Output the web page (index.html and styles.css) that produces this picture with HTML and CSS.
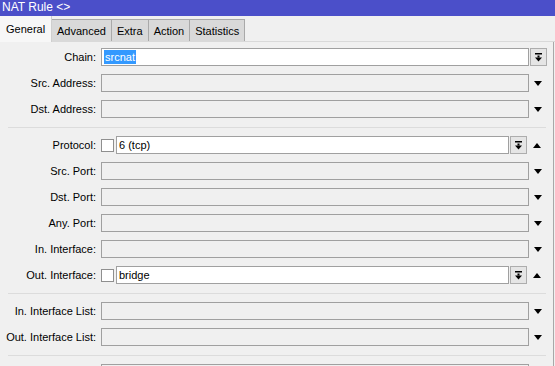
FILE: index.html
```html
<!DOCTYPE html>
<html lang="en">
<head>
    <meta charset="UTF-8">
    <title>NAT Rule</title>
    <link rel="stylesheet" href="styles.css">
</head>
<body>
    <div class="window">
        <div class="titlebar">NAT Rule &lt;&gt;</div>

        <!-- tabs -->
        <div class="tabs">
            <div class="tab active">General</div>
            <div class="tab">Advanced</div>
            <div class="tab">Extra</div>
            <div class="tab">Action</div>
            <div class="tab">Statistics</div>
        </div>

        <div class="panel">
            <div class="section">
                <div class="row">
                    <label>Chain:</label>
                    <div class="field"><span class="sel">srcnat</span></div>
                    <div class="btn"><svg width="9" height="9" viewBox="0 0 9 9"><rect x="1" y="0" width="7" height="1.5"/><rect x="3.5" y="2.5" width="2" height="2"/><polygon points="1,4.5 8,4.5 4.5,8.5"/></svg></div>
                </div>
                <div class="row">
                    <label>Src. Address:</label>
                    <div class="field off"></div>
                    <div class="arrow down"></div>
                </div>
                <div class="row">
                    <label>Dst. Address:</label>
                    <div class="field off"></div>
                    <div class="arrow down"></div>
                </div>
            </div>

            <div class="section">
                <div class="row">
                    <label>Protocol:</label>
                    <div class="check"></div>
                    <div class="field short">6 (tcp)</div>
                    <div class="btn"><svg width="9" height="9" viewBox="0 0 9 9"><rect x="1" y="0" width="7" height="1.5"/><rect x="3.5" y="2.5" width="2" height="2"/><polygon points="1,4.5 8,4.5 4.5,8.5"/></svg></div>
                    <div class="arrow up"></div>
                </div>
                <div class="row">
                    <label>Src. Port:</label>
                    <div class="field off"></div>
                    <div class="arrow down"></div>
                </div>
                <div class="row">
                    <label>Dst. Port:</label>
                    <div class="field off"></div>
                    <div class="arrow down"></div>
                </div>
                <div class="row">
                    <label>Any. Port:</label>
                    <div class="field off"></div>
                    <div class="arrow down"></div>
                </div>
                <div class="row">
                    <label>In. Interface:</label>
                    <div class="field off"></div>
                    <div class="arrow down"></div>
                </div>
                <div class="row">
                    <label>Out. Interface:</label>
                    <div class="check"></div>
                    <div class="field short">bridge</div>
                    <div class="btn"><svg width="9" height="9" viewBox="0 0 9 9"><rect x="1" y="0" width="7" height="1.5"/><rect x="3.5" y="2.5" width="2" height="2"/><polygon points="1,4.5 8,4.5 4.5,8.5"/></svg></div>
                    <div class="arrow up"></div>
                </div>
            </div>

            <div class="section">
                <div class="row">
                    <label>In. Interface List:</label>
                    <div class="field off"></div>
                    <div class="arrow down"></div>
                </div>
                <div class="row">
                    <label>Out. Interface List:</label>
                    <div class="field off"></div>
                    <div class="arrow down"></div>
                </div>
            </div>

            <div class="section">
                <div class="row">
                    <label></label>
                    <div class="field off"></div>
                </div>
            </div>
        </div>
    </div>
</body>
</html>
```

FILE: styles.css
```css
/* winbox style dialog */
html, body {
    margin: 0;
    padding: 0;
    height: 100%;
    overflow: hidden;
}
body {
    font-family: 'Liberation Sans', Arial, sans-serif;
    font-size: 11px;
    color: #000;
    background: #f0f0f0;
}
.window {
    width: 555px;
    height: 366px;
    overflow: hidden;
    display: flex;
    flex-direction: column;
}
.titlebar {
    height: 16px;
    line-height: 15px;
    padding-left: 2px;
    background: #4b4fc9;
    color: #fff;
    font-size: 12px;
    flex: none;
}
.tabs {
    display: flex;
    align-items: flex-end;
    height: 26px;
    flex: none;
    border-bottom: 1px solid #d9d9d9;
    box-sizing: border-box;
}
.tab {
    height: 22px;
    line-height: 22px;
    padding: 0 5px;
    background: #d9d9d9;
    border: 1px solid #a9a9a9;
    border-bottom: none;
    border-left: none;
    box-sizing: border-box;
}
.tab.active {
    height: 26px;
    line-height: 26px;
    padding: 0 6px;
    width: 52px;
    background: #f7f7f7;
    border: none;
    border-right: 1px solid #cfcfcf;
    margin-bottom: -1px;
}
.panel {
    flex: 1;
    width: 554px;
    border-right: 1px solid #a8a8a8;
    box-sizing: border-box;
    padding-top: 6px;
}
.section {
    display: flex;
    flex-direction: column;
    gap: 8px;
    margin: 0 8px 8px 8px;
    padding: 0 0 9px 0;
    border-bottom: 1px solid #dcdcdc;
    width: 538px;
}
.row {
    display: flex;
    align-items: center;
    height: 18px;
    margin-left: -8px;
}
.row label {
    width: 96px;
    margin-right: 5px;
    text-align: right;
    white-space: nowrap;
    flex: none;
}
.field {
    width: 428px;
    height: 18px;
    box-sizing: border-box;
    border: 1px solid #a0a0a0;
    background: #fff;
    padding-left: 2px;
    line-height: 16px;
    flex: none;
}
.field.off {
    background: #f0f0f0;
}
.field.short {
    width: 393px;
    margin-left: 2px;
}
.sel {
    background: #3399ff;
    color: #fff;
    padding: 1px 1px;
}
.check {
    width: 13px;
    height: 13px;
    box-sizing: border-box;
    border: 1px solid #8f8f8f;
    background: #fff;
    flex: none;
}
.btn {
    width: 17px;
    height: 18px;
    margin-left: 1px;
    box-sizing: border-box;
    border: 1px solid #adadad;
    background: #e5e5e5;
    display: flex;
    align-items: center;
    justify-content: center;
    flex: none;
}
.arrow {
    width: 17px;
    height: 18px;
    flex: none;
    display: flex;
    align-items: center;
    justify-content: center;
}
.arrow::after {
    content: "";
    border-left: 4.5px solid transparent;
    border-right: 4.5px solid transparent;
}
.arrow.down::after {
    border-top: 5px solid #000;
}
.arrow.up::after {
    border-bottom: 5px solid #000;
}
.arrow.up {
    margin-left: 1px;
}
```
